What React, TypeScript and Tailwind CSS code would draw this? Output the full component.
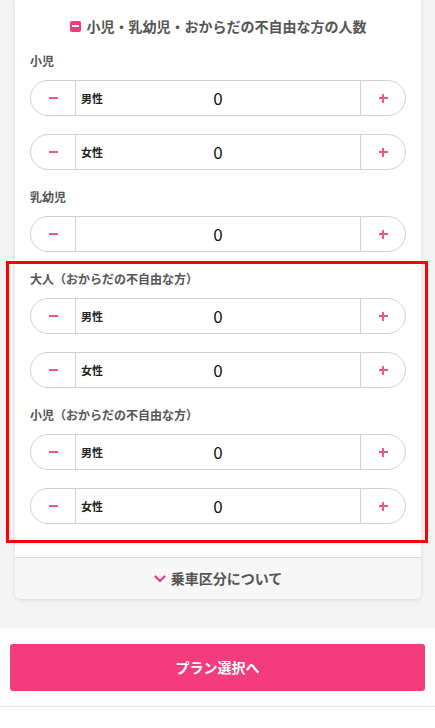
import React from 'react';

const font = { fontFamily: '"Noto Sans CJK JP", "Noto Sans", sans-serif' };

function Stepper({ label }: { label?: string }) {
  return (
    <div className="flex h-[36px] items-stretch rounded-full border border-[#d2d2d2] bg-white">
      <div className="flex w-[45px] shrink-0 items-center justify-center border-r border-[#d2d2d2]">
        <span className="block h-[2px] w-[9px] bg-[#f2558d]" />
      </div>
      <div className="relative flex flex-1 items-center">
        {label && (
          <span className="absolute left-[5px] text-[11px] font-bold text-[#222]">{label}</span>
        )}
        <span className="w-full text-center text-[17px] text-[#111]">0</span>
      </div>
      <div className="flex w-[45px] shrink-0 items-center justify-center border-l border-[#d2d2d2]">
        <span className="relative block h-[9px] w-[9px]">
          <span className="absolute left-0 top-[3.5px] h-[2px] w-[9px] bg-[#f2558d]" />
          <span className="absolute left-[3.5px] top-0 h-[9px] w-[2px] bg-[#f2558d]" />
        </span>
      </div>
    </div>
  );
}

function Group({ title, rows }: { title: string; rows: (string | undefined)[] }) {
  return (
    <div>
      <div className="mb-[9px] h-[20px] text-[12px] font-bold leading-[20px] text-[#555]">{title}</div>
      <div className="flex flex-col gap-[18px]">
        {rows.map((r, i) => (
          <Stepper key={i} label={r} />
        ))}
      </div>
    </div>
  );
}

export default function App() {
  return (
    <div className="relative min-h-screen bg-white" style={font}>
      <div className="bg-[#f4f4f4] pb-[29px]">
        <div className="ml-[15px] w-[406px] rounded-b-[6px] bg-white shadow-[0_1px_4px_rgba(0,0,0,0.12)]">
          <div className="px-[15px] pb-[33px]">
            <div className="flex h-[51px] items-center justify-center gap-[6px] pt-[1px]">
              <span className="flex h-[11px] w-[11px] items-center justify-center rounded-[2px] bg-[#f43c7c]">
                <span className="block h-[2px] w-[7px] bg-white" />
              </span>
              <span className="text-[14px] font-bold text-[#555]">
                小児・乳幼児・おからだの不自由な方の人数
              </span>
            </div>
            <div className="flex flex-col gap-[17px]">
              <Group title="小児" rows={['男性', '女性']} />
              <Group title="乳幼児" rows={[undefined]} />
              <Group title="大人（おからだの不自由な方）" rows={['男性', '女性']} />
              <Group title="小児（おからだの不自由な方）" rows={['男性', '女性']} />
            </div>
          </div>
          <div className="flex h-[42px] items-center justify-center gap-[5px] rounded-b-[6px] border-t border-[#dcdcdc] bg-[#f7f7f7]">
            <svg width="12" height="8" viewBox="0 0 12 8" fill="none">
              <path d="M1.5 1.5 6 6l4.5-4.5" stroke="#f43c7c" strokeWidth="2.2" strokeLinecap="round" strokeLinejoin="round" />
            </svg>
            <span className="text-[14px] font-bold text-[#555]">乗車区分について</span>
          </div>
        </div>
      </div>
      <div className="border-b border-[#e2e2e2] bg-[#fdfdfd] px-[10px] pb-[15px] pt-[16px]">
        <button className="flex h-[47px] w-full items-center justify-center rounded-[3px] bg-[#f43c7c] text-[14px] font-bold text-white">
          プラン選択へ
        </button>
      </div>
      <div className="pointer-events-none absolute left-[6px] top-[261px] h-[282px] w-[422px] border-[3px] border-[#ff0000]" />
    </div>
  );
}
